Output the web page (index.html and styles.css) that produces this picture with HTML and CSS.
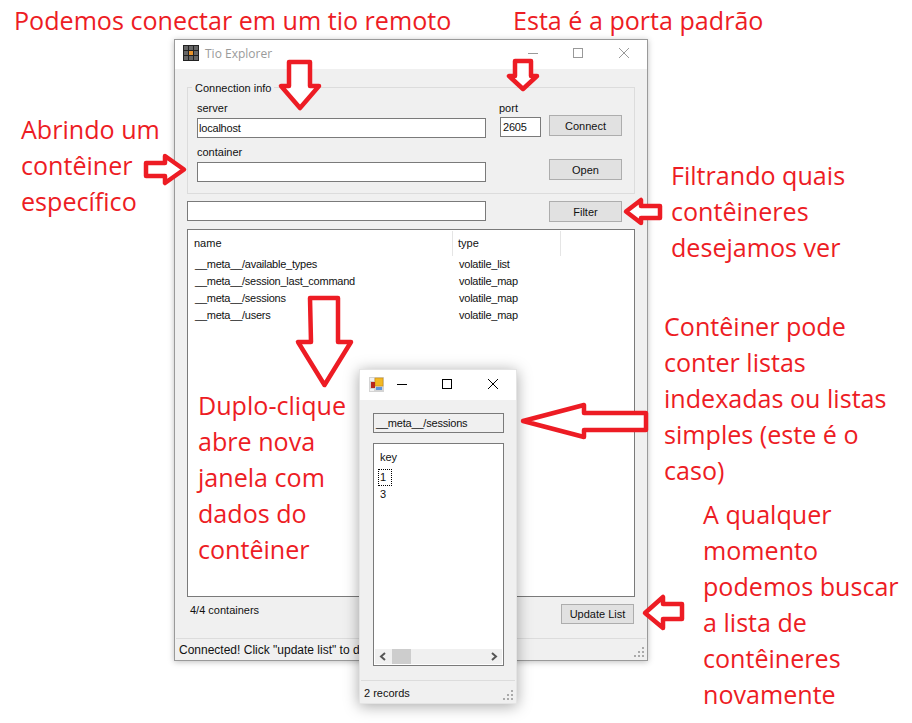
FILE: index.html
```html
<!DOCTYPE html>
<html lang="pt">
<head>
<meta charset="utf-8">
<title>Tio Explorer</title>
<link rel="stylesheet" href="styles.css">
</head>
<body>
<div class="canvas">
  <section class="win main-win">
    <header class="titlebar">
      <svg class="app-icon" width="16" height="16" viewBox="0 0 16 16"><rect width="16" height="16" fill="#222"/><g fill="#666"><rect x="1" y="1" width="4" height="4"/><rect x="6" y="1" width="4" height="4"/><rect x="11" y="1" width="4" height="4"/><rect x="1" y="6" width="4" height="4"/><rect x="11" y="6" width="4" height="4"/><rect x="1" y="11" width="4" height="4"/><rect x="6" y="11" width="4" height="4"/><rect x="11" y="11" width="4" height="4"/></g><rect x="6" y="6" width="4" height="4" fill="#e8932a"/></svg>
      <span class="win-title">Tio Explorer</span>
      <div class="controls dim">
        <svg width="46" height="30" viewBox="0 0 46 30"><path d="M19 14.5h10" stroke="currentColor" fill="none"/></svg>
        <svg width="46" height="30" viewBox="0 0 46 30"><rect x="18.5" y="9.5" width="9" height="9" stroke="currentColor" fill="none"/></svg>
        <svg width="46" height="30" viewBox="0 0 46 30"><path d="M18 9l10 10M28 9l-10 10" stroke="currentColor" fill="none"/></svg>
      </div>
    </header>
    <div class="main-body">
      <div class="group">
        <span class="legend">Connection info</span>
        <div class="group-row first-row">
          <div class="field wide"><label>server</label><div class="input">localhost</div></div>
          <div class="field port"><label>port</label><div class="input">2605</div></div>
          <div class="btn conn">Connect</div>
        </div>
        <div class="group-row second-row">
          <div class="field wide"><label>container</label><div class="input"></div></div>
          <div class="btn open">Open</div>
        </div>
      </div>
      <div class="filter-row">
        <div class="input filter-input"></div>
        <div class="btn">Filter</div>
      </div>
      <div class="listview">
        <div class="lv-head"><span class="col-name">name</span><span class="col-type">type</span></div>
        <div class="lv-row"><span class="col-name">__meta__/available_types</span><span>volatile_list</span></div>
        <div class="lv-row"><span class="col-name">__meta__/session_last_command</span><span>volatile_map</span></div>
        <div class="lv-row"><span class="col-name">__meta__/sessions</span><span>volatile_map</span></div>
        <div class="lv-row"><span class="col-name">__meta__/users</span><span>volatile_map</span></div>
      </div>
      <div class="main-foot">
        <span class="count">4/4 containers</span>
        <div class="btn">Update List</div>
      </div>
    </div>
    <footer class="statusbar"><span class="status-text">Connected! Click "update list" to download</span><svg class="grip" width="12" height="12" viewBox="0 0 12 12"><path d="M9 1h2v2H9zM5 5h2v2H5zM9 5h2v2H9zM1 9h2v2H1zM5 9h2v2H5zM9 9h2v2H9z" fill="#aaa"/></svg></footer>
  </section>

  <section class="win pop-win">
    <header class="pop-titlebar">
      <svg class="pop-icon" width="15" height="15" viewBox="0 0 15 15"><rect width="15" height="15" fill="#d4d4d4"/><rect x="1" y="1" width="4" height="3" fill="#f2f2f2"/><rect x="1" y="12" width="4" height="2" fill="#f2f2f2"/><rect x="6" y="1" width="8" height="8" fill="#f2b824" stroke="#c98a10" stroke-width=".6"/><rect x="2" y="5" width="4" height="6" fill="#b8271e"/><rect x="7" y="10" width="6" height="3" fill="#5f95dc"/></svg>
      <div class="pop-controls">
        <svg width="11" height="11" viewBox="0 0 11 11"><path d="M0 5.500h10" stroke="#000" fill="none"/></svg>
        <svg width="11" height="11" viewBox="0 0 11 11"><rect x=".5" y=".5" width="9" height="9" stroke="#000" fill="none"/></svg>
        <svg class="pop-close" width="11" height="11" viewBox="0 0 11 11"><path d="M0 0l10 10M10 0l-10 10" stroke="#000" fill="none"/></svg>
      </div>
    </header>
    <div class="pop-body">
      <div class="pop-name">__meta__/sessions</div>
      <div class="pop-list">
        <div class="pop-items">
          <div class="pop-head">key</div>
          <div class="pop-item"><span class="focus">1</span></div>
          <div class="pop-item"><span class="plain">3</span></div>
        </div>
        <div class="hscroll">
          <svg width="17" height="15" viewBox="0 0 17 15"><path d="M10 4l-4 3.500 4 3.500" stroke="#555" stroke-width="2" fill="none"/></svg>
          <div class="thumb"></div>
          <svg class="scroll-end" width="17" height="15" viewBox="0 0 17 15"><path d="M7 4l4 3.500-4 3.500" stroke="#555" stroke-width="2" fill="none"/></svg>
        </div>
      </div>
    </div>
    <footer class="statusbar pop-status"><span class="status-text">2 records</span><svg class="grip" width="12" height="12" viewBox="0 0 12 12"><path d="M9 1h2v2H9zM5 5h2v2H5zM9 5h2v2H9zM1 9h2v2H1zM5 9h2v2H5zM9 9h2v2H9z" fill="#aaa"/></svg></footer>
  </section>

  <svg class="arrows" width="912" height="723" viewBox="0 0 912 723">
    <g fill="#fff" stroke="#ed1c24" stroke-width="4.5" stroke-linejoin="round">
      <path d="M289 62h21v24h9l-19 22-19-22h8z"/>
      <path d="M515 61h16v15h6l-14 13-14-13h6z"/>
      <path d="M146 163h19v-7l19 13.500-19 13.500v-7h-19z"/>
      <path d="M660 206v12h-19v5l-15-11.500 15-11.500v6z"/>
      <path d="M310 298h28v44h13l-26.500 43-26.500-43h13z"/>
      <path d="M646 413v17h-62v7l-61-16 61-16v8z"/>
      <path d="M682 604v15h-19v9l-18-15 18-16v7z"/>
    </g>
  </svg>

  <p class="note n1">Podemos conectar em um tio remoto</p>
  <p class="note n2">Esta é a porta padrão</p>
  <p class="note n3">Abrindo um<br>contêiner<br>específico</p>
  <p class="note n4">Filtrando quais<br>contêineres<br>desejamos ver</p>
  <p class="note n5">Contêiner pode<br>conter listas<br>indexadas ou listas<br>simples (este é o<br>caso)</p>
  <p class="note n6">Duplo-clique<br>abre nova<br>janela com<br>dados do<br>contêiner</p>
  <p class="note n7">A qualquer<br>momento<br>podemos buscar<br>a lista de<br>contêineres<br>novamente</p>
</div>
</body>
</html>
```
FILE: styles.css
```css
* { box-sizing: border-box; }
html, body { margin: 0; padding: 0; background: #fff; }
.canvas { position: relative; width: 912px; height: 723px; overflow: hidden; font-family: "Liberation Sans", Arial, sans-serif; font-size: 11px; color: #111; }

.win { position: absolute; display: flex; flex-direction: column; background: #f0f0f0; }
.main-win { left: 174px; top: 39px; width: 474px; height: 622px; border: 1px solid #9a9a9a; box-shadow: 0 1px 6px rgba(0,0,0,.25); }
.pop-win { left: 359px; top: 369px; width: 158px; height: 335px; border: 1px solid #e4e4e4; box-shadow: 0 2px 14px rgba(0,0,0,.35); }

.titlebar { display: flex; align-items: center; height: 29px; padding-bottom: 1px; flex: none; background: #fff; }
.app-icon { margin-left: 8px; margin-bottom: 2px; }
.win-title { margin-left: 6px; margin-bottom: 2px; font-family: "Open Sans", sans-serif; font-size: 12px; color: #9a9a9a; }
.controls { display: flex; margin-left: auto; }
.controls.dim { color: #999; }

.pop-titlebar { display: flex; align-items: center; height: 30px; padding-bottom: 1px; flex: none; background: #fff; }
.pop-icon { margin-left: 9px; }
.pop-controls { display: flex; gap: 34px; margin-left: 13px; }
.pop-close { margin-left: 1px; }

.main-body { flex: 1; display: flex; flex-direction: column; padding: 18px 12px 0 12px; }

.group { position: relative; flex: none; height: 107px; border: 1px solid #dcdcdc; padding: 13px 0 0 9px; }
.legend { position: absolute; left: 4px; top: -6px; padding: 0 3px; background: #f0f0f0; color: #111; }
.group-row { display: flex; align-items: flex-start; }
.first-row { height: 44px; }
.field { display: flex; flex-direction: column; }
.field label { line-height: 13px; height: 17px; padding-top: 1px; }
.wide { width: 289px; }
.port { width: 41px; margin-left: 14px; }
.port label { height: 16px; margin-left: -1px; }
.port .input { padding-left: 2px; }
.btn { display: flex; align-items: center; justify-content: center; width: 73px; height: 21px; background: #e1e1e1; border: 1px solid #adadad; color: #111; }
.conn { margin-left: 8px; margin-top: 14px; }
.open { margin-left: 63px; margin-top: 14px; }
.input { height: 20px; background: #fff; border: 1px solid #7a7a7a; padding-left: 1px; line-height: 18px; color: #111; letter-spacing: -.2px; }

.filter-row { display: flex; justify-content: space-between; height: 21px; margin-top: 7px; padding-right: 13px; }
.filter-input { flex: none; width: 299px; height: 20px; }

.listview { margin-top: 7px; height: 368px; width: 448px; flex: none; background: #fff; border: 1px solid #7a7a7a; }
.lv-head { display: flex; height: 25px; margin-top: 1px; line-height: 24px; }
.lv-head .col-name { width: 265px; padding-left: 6px; border-right: 1px solid #e5e5e5; }
.col-type { width: 108px; padding-left: 5px; border-right: 1px solid #e5e5e5; }
.lv-row { display: flex; height: 17px; line-height: 17px; letter-spacing: -.24px; }
.lv-row .col-name { width: 264px; padding-left: 7px; flex: none; }
.lv-row span:last-child { padding-left: 7px; }

.main-foot { display: flex; justify-content: space-between; align-items: flex-start; padding: 7px 1px 0 3px; }
.main-foot .btn { height: 20px; }

.statusbar { position: relative; display: flex; align-items: center; flex: none; height: 22px; margin: 0 1px; border-top: 1px solid #dcdcdc; padding-left: 3px; white-space: nowrap; overflow: hidden; font-size: 12px; }
.grip { position: absolute; right: 1px; bottom: 2px; }
.pop-status { height: 23px; font-size: 11px; padding-left: 3px; padding-top: 2px; }

.pop-body { flex: 1; padding: 13px 12px 14px 13px; display: flex; flex-direction: column; }
.pop-name { height: 20px; width: 131px; background: #f0f0f0; border: 1px solid #7a7a7a; line-height: 18px; padding-left: 2px; letter-spacing: -.2px; }
.pop-list { margin-top: 10px; flex: 1; width: 131px; display: flex; flex-direction: column; background: #fff; border: 1px solid #7a7a7a; padding: 1px; }
.pop-items { flex: 1; padding: 3px 0 0 3px; }
.pop-head { height: 21px; line-height: 18px; padding-left: 2px; }
.pop-item { height: 17px; line-height: 16px; }
.focus { display: inline-block; height: 17px; width: 14px; border: 1px dotted #000; line-height: 15px; padding-left: 1px; }
.plain { padding-left: 2px; }
.hscroll { display: flex; align-items: center; height: 15px; background: #f0f0f0; }
.thumb { width: 19px; height: 15px; background: #cdcdcd; }
.scroll-end { margin-left: auto; }

.arrows { position: absolute; left: 0; top: 0; pointer-events: none; }

.note { position: absolute; margin: 0; font-family: "Open Sans", sans-serif; font-size: 25.1px; line-height: 36px; color: #ed1c24; white-space: nowrap; }
.n1 { left: 14px; top: 2px; }
.n2 { left: 513px; top: 2px; }
.n3 { left: 21px; top: 111px; }
.n4 { left: 671px; top: 157px; }
.n5 { left: 664px; top: 308px; }
.n6 { left: 198px; top: 387px; }
.n7 { left: 703px; top: 496px; }
```
